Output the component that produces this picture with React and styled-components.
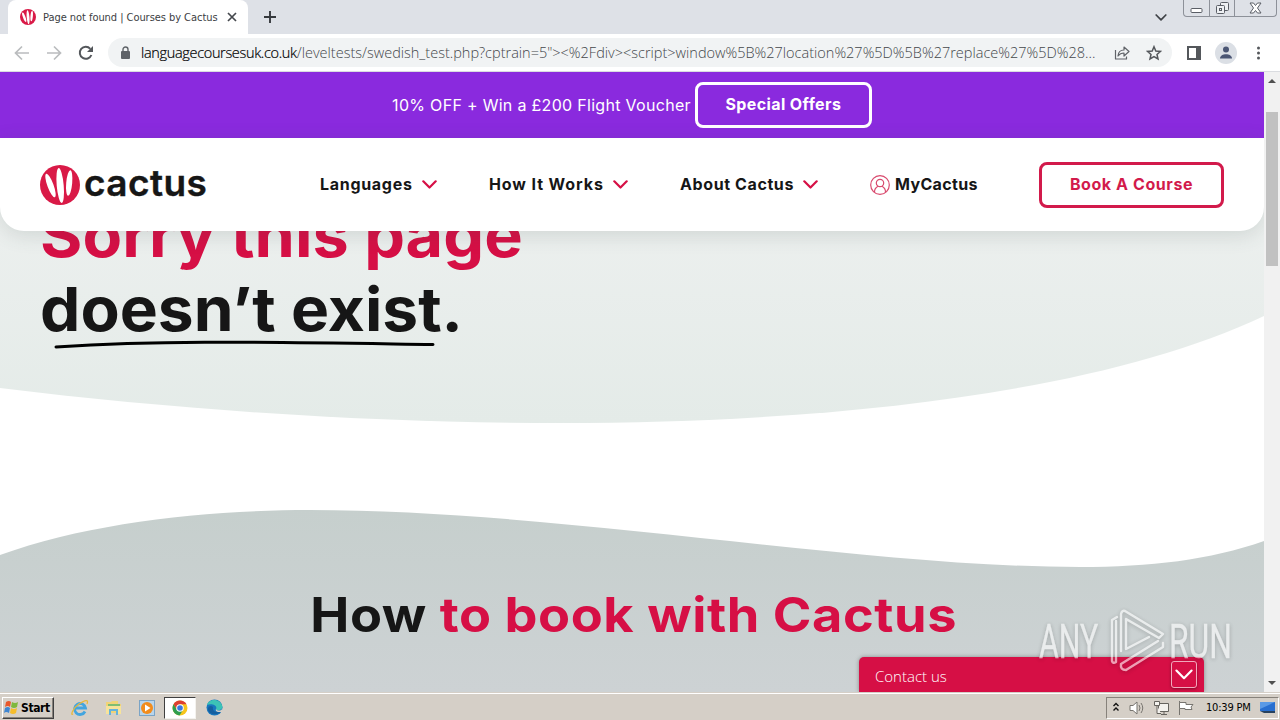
import React from 'react';
import styled, { createGlobalStyle } from 'styled-components';

const GlobalStyle = createGlobalStyle`
    * { box-sizing: border-box; }
    body {
        margin: 0;
        overflow: hidden;
        font-family: Inter, "Open Sans", sans-serif;
        color: #161616;
    }
    svg { display: block; flex: none; }
`;
const Screen = styled.div`
    width: 1280px;
    height: 720px;
    display: flex;
    flex-direction: column;
    overflow: hidden;
    background: #fff;
`;
const Text = styled.span`
    display: block;
    white-space: nowrap;
    letter-spacing: ${(p) => p.$track || 0}px;
`;

/* browser */
const TabStrip = styled.div`
    position: relative;
    height: 34px;
    background: #dee1e7;
    display: flex;
    align-items: stretch;
    padding-left: 8px;
`;
const Tab = styled.div`
    width: 240px;
    background: #fff;
    border-radius: 8px 8px 0 0;
    display: flex;
    align-items: center;
    padding-left: 12px;
    gap: 7px;
    font: 11px "DejaVu Sans", sans-serif;
    font-stretch: condensed;
    color: #3c4043;
    svg:last-child { margin-left: -1px; }
`;
const NewTab = styled.div`
    display: flex;
    align-items: center;
    padding-left: 15px;
`;
const TabSearch = styled.div`
    margin-left: auto;
    display: flex;
    align-items: center;
    padding-right: 16px;
`;
const WindowButtons = styled.div`
    display: flex;
    width: 94px;
    height: 17px;
    margin-right: 3px;
    border: 1px solid #8d9199;
    border-top: 0;
    border-radius: 0 0 4px 4px;
`;
const WindowButton = styled.div`
    width: ${(p) => p.$w}px;
    display: flex;
    align-items: center;
    justify-content: center;
    & + & { border-left: 1px solid #8d9199; }
`;
const Toolbar = styled.div`
    height: 38px;
    border-bottom: 1px solid #dadce0;
    display: flex;
    align-items: center;
    padding-left: 14px;
`;
const NavButtons = styled.div`
    display: flex;
    gap: 16px;
    width: 94px;
`;
const AddressBar = styled.div`
    width: 1064px;
    height: 29px;
    border-radius: 15px;
    background: #f1f3f4;
    display: flex;
    align-items: center;
    padding: 0 10px 0 12px;
`;
const Url = styled(Text)`
    width: 973px;
    margin-left: 9px;
    font: 300 14.5px "Open Sans", sans-serif;
    color: #44474b;
    b {
        font-weight: 300;
        letter-spacing: -0.33px;
        color: #000;
        -webkit-text-stroke: 0.2px #000;
    }
`;
const AddressIcons = styled.div`
    display: flex;
    gap: 16px;
`;
const ToolbarIcons = styled.div`
    display: flex;
    align-items: center;
    gap: 14px;
    padding-left: 14px;
`;

/* page */
const Viewport = styled.div`
    height: 620px;
    display: flex;
`;
const Page = styled.main`
    position: relative;
    width: 1264px;
    overflow: hidden;
`;
const Banner = styled.div`
    height: 66px;
    background: #8a2ade;
    color: #fff;
    display: flex;
    align-items: center;
    justify-content: center;
    gap: 4px;
    font-size: 16px;
`;
const OutlineButton = styled.div`
    width: ${(p) => p.$w}px;
    height: 46px;
    border: 3px solid ${(p) => p.$color};
    border-radius: 8px;
    color: ${(p) => p.$color};
    display: flex;
    align-items: center;
    justify-content: center;
    font-size: 16px;
    font-weight: 700;
    padding-bottom: 2px;
`;
const Header = styled.header`
    position: relative;
    z-index: 2;
    height: 93px;
    padding: 0 40px;
    background: #fff;
    border-radius: 0 0 24px 24px;
    box-shadow: 0 4px 20px rgba(60, 80, 75, 0.16);
    display: grid;
    grid-template-columns: 280px 169px 191px 190px 169px 185px;
    align-items: center;
`;
const Brand = styled.div`
    display: flex;
    align-items: center;
    gap: 4px;
    padding-top: 1px;
`;
const BrandName = styled(Text)`
    font: 600 37px/40px Inter, sans-serif;
    margin-top: -4px;
    -webkit-text-stroke: 0.4px #161616;
`;
const NavItem = styled.div`
    display: flex;
    align-items: center;
    gap: ${(p) => p.$gap || 9}px;
    font-size: 16px;
    font-weight: 700;
    color: #161616;
    span { margin-top: -1px; }
`;
const Hero = styled.section`
    position: relative;
    height: 232px;
    margin-top: -40px;
    padding: 7px 40px 0;
`;
const Backdrop = styled.svg`
    position: absolute;
    left: 0;
    top: 0;
    z-index: -1;
`;
const HeroTitle = styled.h1`
    margin: 0;
    font-size: 61px;
    line-height: 74px;
    font-weight: 700;
    color: #161616;
`;
const WideText = styled(Text)`
    transform: scaleX(${(p) => p.$stretch});
    transform-origin: ${(p) => p.$origin || 'left'};
    color: ${(p) => (p.$pink ? '#d60f45' : '#161616')};
`;
const Pink = styled.span`
    color: #d60f45;
`;
const Underline = styled.svg`
    margin: -6px 0 0 14px;
`;
const Booking = styled.section`
    position: relative;
    height: 182px;
    margin-top: 87px;
    padding-top: 75px;
    display: flex;
    justify-content: center;
`;
const BookingTitle = styled.h2`
    margin: 0 0 0 3px;
    height: 60px;
    font-size: 48px;
    line-height: 60px;
    font-weight: 700;
`;
const Layers = styled.div`
    position: relative;
    z-index: 0;
`;
const ContactBar = styled.div`
    position: absolute;
    left: 859px;
    bottom: 0;
    width: 345px;
    height: 35px;
    padding: 0 7px 0 16px;
    background: #d60f45;
    border-radius: 5px 5px 0 0;
    box-shadow: 0 0 4px rgba(0, 0, 0, 0.35);
    color: #fff;
    display: flex;
    align-items: center;
    justify-content: space-between;
    font: 300 15px "Open Sans", sans-serif;
    span { padding-top: 3px; }
`;
const Collapse = styled.div`
    width: 26px;
    height: 27px;
    border: 1px solid #f3a9bd;
    border-radius: 3px;
    display: flex;
    align-items: center;
    justify-content: center;
    box-shadow: 0 1px 3px rgba(0, 0, 0, 0.4);
`;
const Watermark = styled.svg`
    position: absolute;
    left: 1036px;
    top: 535px;
    z-index: 3;
    filter: drop-shadow(0 1px 2px rgba(0, 0, 0, 0.35));
`;
const Scrollbar = styled.div`
    width: 16px;
    background: #f1f1f1;
    display: flex;
    flex-direction: column;
    align-items: center;
    padding: 7px 0;
`;
const Thumb = styled.div`
    width: 12px;
    height: 154px;
    margin: 29px 0 auto;
    background: #c1c1c1;
`;

/* desktop */
const Taskbar = styled.footer`
    height: 28px;
    background: #d5cfc7;
    border-top: 1px solid #d5cfc7;
    box-shadow: inset 0 1px #fff;
    display: flex;
    align-items: center;
    padding: 3px 1px 1px 2px;
`;
const Start = styled.div`
    width: 52px;
    height: 22px;
    border: 1px solid;
    border-color: #fff #404040 #404040 #fff;
    box-shadow: inset -1px -1px #87827b;
    display: flex;
    align-items: center;
    gap: 1px;
    font: bold 12px "DejaVu Sans", sans-serif;
    font-stretch: condensed;
    color: #000;
`;
const Launcher = styled.div`
    width: ${(p) => p.$w || 34}px;
    height: 22px;
    display: flex;
    align-items: center;
    justify-content: center;
    ${(p) => p.$active && `
        background: #fff;
        border: 1px solid;
        border-color: #404040 #f4f2ee #f4f2ee #404040;
    `}
`;
const Launchers = styled.div`
    display: flex;
    margin-left: 9px;
`;
const Tray = styled.div`
    margin-left: auto;
    width: 173px;
    height: 22px;
    border: 1px solid;
    border-color: #87827b #fff #fff #87827b;
    display: flex;
    align-items: center;
    padding-left: 5px;
    gap: 8px;
    color: #000;
    font: 11px "DejaVu Sans", sans-serif;
    font-stretch: condensed;
`;
const Clock = styled(Text)`
    margin-left: 3px;
`;

function CactusMark({ size }) {
    return (
        <svg width={size} height={size} viewBox="0 0 40 40">
            <circle cx="20" cy="20" r="20" fill="#d91a47" />
            <g fill="#fff">
                <ellipse cx="10.5" cy="20.5" rx="3.1" ry="12.5" transform="rotate(-20 10.5 20.5)" />
                <ellipse cx="20.2" cy="20.5" rx="3.5" ry="17.5" transform="rotate(-5 20.2 20.5)" />
                <ellipse cx="29.2" cy="18" rx="3" ry="12.8" transform="rotate(5 29.2 18)" />
            </g>
        </svg>
    );
}

function Chevron({ w = 15, h = 9, color = '#d60f45', stroke = 2.2 }) {
    return (
        <svg width={w} height={h} viewBox="0 0 15 9" fill="none" stroke={color} strokeWidth={stroke} strokeLinecap="round" strokeLinejoin="round">
            <path d="M1.3 1.3L7.5 7.5L13.7 1.3" />
        </svg>
    );
}

function BrowserChrome() {
    return (
        <>
            <TabStrip>
                <Tab>
                    <CactusMark size={16} />
                    <Text $track={-0.05}>Page not found | Courses by Cactus</Text>
                    <svg width="16" height="16" viewBox="0 0 16 16" stroke="#45484d" strokeWidth="1.7">
                        <path d="M4 4L12 12M12 4L4 12" />
                    </svg>
                </Tab>
                <NewTab>
                    <svg width="14" height="14" viewBox="0 0 14 14" stroke="#36393e" strokeWidth="1.9">
                        <path d="M7 1V13M1 7H13" />
                    </svg>
                </NewTab>
                <TabSearch>
                    <Chevron w={12} h={7} color="#3f4247" />
                </TabSearch>
                <WindowButtons>
                    <WindowButton $w={25}>
                        <svg width="13" height="13" fill="#fff" stroke="#5a5e66"><rect x="1" y="6.5" width="11" height="4" rx="1" /></svg>
                    </WindowButton>
                    <WindowButton $w={25}>
                        <svg width="13" height="14" fill="#eef0f3" stroke="#5a5e66">
                            <rect x="4.5" y="1.5" width="8" height="8" rx="1" />
                            <rect x=".5" y="4.5" width="8" height="8" rx="1" />
                            <rect x="3.5" y="7.5" width="2" height="2" />
                        </svg>
                    </WindowButton>
                    <WindowButton $w={42}>
                        <svg width="13" height="12" viewBox="0 0 13 12" fill="#fff" stroke="#5a5e66">
                            <path d="M1 1H4.5L6.5 3.5L8.5 1H12L8.5 6L12 11H8.5L6.5 8.5L4.5 11H1L4.5 6Z" />
                        </svg>
                    </WindowButton>
                </WindowButtons>
            </TabStrip>
            <Toolbar>
                <NavButtons>
                    {['M15 8H2M8 1.5L1.5 8L8 14.5', 'M1 8H14M8 1.5L14.5 8L8 14.5'].map((d) => (
                        <svg key={d} width="16" height="16" fill="none" stroke="#babcbe" strokeWidth="1.7"><path d={d} /></svg>
                    ))}
                    <svg width="16" height="16" fill="none" stroke="#54575b" strokeWidth="2">
                        <path d="M13.4 10A6 6 0 1 1 12.3 3.8" />
                        <path d="M15 1V7H9Z" fill="#54575b" stroke="none" />
                    </svg>
                </NavButtons>
                <AddressBar>
                    <svg width="12" height="14" viewBox="0 0 12 14">
                        <rect x="1" y="5" width="9" height="8" rx="1" fill="#5f6368" />
                        <path d="M3 6V3.5A2.5 2.5 0 0 1 8 3.5V6" fill="none" stroke="#5f6368" strokeWidth="1.4" />
                    </svg>
                    <Url $track={0}>
                        <b>languagecoursesuk.co.uk</b>
                        {'/leveltests/swedish_test.php?cptrain=5"><%2Fdiv><script>window%5B%27location%27%5D%5B%27replace%27%5D%28...'}
                    </Url>
                    <AddressIcons>
                        <svg width="16" height="16" fill="none" stroke="#606368" strokeWidth="1.2" strokeLinejoin="round">
                            <path d="M1.5 5V14H12.5V11.5M4 11C4.3 7 6.5 5 10 5V2L15 6.5L10 11V8C7.5 8 5.5 9 4 11Z" />
                        </svg>
                        <svg width="16" height="16" viewBox="0 0 16 16" fill="none" stroke="#54575b" strokeWidth="1.5">
                            <path d="M8 1.7L9.8 6L14.5 6.4L11 9.5L12 14L8 11.6L4 14L5 9.5L1.5 6.4L6.2 6Z" />
                        </svg>
                    </AddressIcons>
                </AddressBar>
                <ToolbarIcons>
                    <svg width="15" height="14"><path d="M2 1H14V13H2Z" fill="none" stroke="#54575b" strokeWidth="2" /><path d="M10 1H14V13H10Z" fill="#54575b" /></svg>
                    <svg width="22" height="22">
                        <circle cx="11" cy="11" r="11" fill="#dbdfe5" />
                        <circle cx="11" cy="7.5" r="3" fill="#4b5674" />
                        <path d="M5 16.5C5 10.8 17 10.8 17 16.5Z" fill="#4b5674" />
                    </svg>
                    <svg width="14" height="16" fill="#54575b">
                        <circle cx="7.5" cy="3" r="1.5" /><circle cx="7.5" cy="8" r="1.5" /><circle cx="7.5" cy="13" r="1.5" />
                    </svg>
                </ToolbarIcons>
            </Toolbar>
        </>
    );
}

function SiteHeader() {
    return (
        <>
            <Banner>
                <Text $track={0.3}>10% OFF + Win a £200 Flight Voucher</Text>
                <OutlineButton $w={177} $color="#fff"><Text $track={0.4}>Special Offers</Text></OutlineButton>
            </Banner>
            <Header>
                <Brand>
                    <CactusMark size={40} />
                    <BrandName $track={0.4}>cactus</BrandName>
                </Brand>
                <NavItem><Text $track={0.7}>Languages</Text><Chevron /></NavItem>
                <NavItem><Text $track={0.9}>How It Works</Text><Chevron /></NavItem>
                <NavItem><Text $track={0.6}>About Cactus</Text><Chevron /></NavItem>
                <NavItem $gap={5}>
                    <svg width="20" height="20" fill="none" stroke="#d94a6e" strokeWidth="1.2">
                        <circle cx="10" cy="10" r="9.3" />
                        <circle cx="10" cy="8" r="3.7" />
                        <path d="M4.5 17C4.5 13.5 6.5 12 8 11.2M15.5 17C15.5 13.5 13.5 12 12 11.2" />
                    </svg>
                    <Text $track={0.35}>MyCactus</Text>
                </NavItem>
                <OutlineButton $w={185} $color="#d21a4b"><Text $track={0.58}>Book A Course</Text></OutlineButton>
            </Header>
        </>
    );
}

function TaskbarRow() {
    return (
        <Taskbar>
            <Start>
                <svg width="17" height="17" viewBox="0 0 17 17">
                    <path d="M3 3Q6 1 8 3L7 8Q5 6 2 8Z" fill="#e8582c" />
                    <path d="M9 3Q12 5 15 3L14 8Q11 10 8 8Z" fill="#7fb83d" />
                    <path d="M2 9Q5 7 7 9L6 14Q3 12 1 14Z" fill="#3f86d2" />
                    <path d="M8 9Q11 11 14 9L13 14Q10 16 7 14Z" fill="#f6bd2b" />
                </svg>
                <Text $track={-0.4}>Start</Text>
            </Start>
            <Launchers>
                <Launcher>
                    <svg width="18" height="18" viewBox="0 0 18 18" fill="none">
                        <path d="M14 12.5A5.5 5.5 0 1 1 14.5 9H5" stroke="#43a5df" strokeWidth="2.8" />
                        <path d="M2 15C-1 17 2 9 8 5C14 1 18 0 16 5" stroke="#e7b83c" strokeWidth="1.3" />
                    </svg>
                </Launcher>
                <Launcher $w={33}>
                    <svg width="17" height="17" viewBox="0 0 17 17">
                        <path d="M1 3H6L7 2H13V5H16V14H1Z" fill="#f1d477" />
                        <path d="M3 5H15V8H3Z" fill="#7fbd73" />
                        <path d="M1 7H16V15H12V11H5V15H1Z" fill="#f7e39a" />
                        <path d="M4 16V10H13V16H11V12H6V16Z" fill="#66b3dc" />
                    </svg>
                </Launcher>
                <Launcher>
                    <svg width="16" height="16" viewBox="0 0 16 16">
                        <rect x=".5" y=".5" width="15" height="15" fill="#b9d5eb" stroke="#7ba4c6" />
                        <circle cx="8" cy="8" r="6" fill="#f28c1c" />
                        <path d="M6 4.5L11.5 8L6 11.5Z" fill="#fff" />
                    </svg>
                </Launcher>
                <Launcher $active $w={32}>
                    <svg width="16" height="16" viewBox="0 0 16 16">
                        <circle cx="8" cy="8" r="7.5" fill="#f6c51c" />
                        <path d="M1.5 4.3A7.5 7.5 0 0 1 14.5 4.3H8L5 10Z" fill="#dd3f32" />
                        <path d="M1.5 4.3A7.5 7.5 0 0 0 7.5 15.5L11 10L5 10Z" fill="#2f9e50" />
                        <circle cx="8" cy="8" r="3.8" fill="#fff" />
                        <circle cx="8" cy="8" r="2.8" fill="#3978df" />
                    </svg>
                </Launcher>
                <Launcher $w={36}>
                    <svg width="17" height="17" viewBox="0 0 17 17">
                        <circle cx="8.5" cy="8.5" r="8" fill="#1877be" />
                        <path d="M1 6C3 -1 15 -1 16.5 8C16 12 10 12 10 10C12 6 5 4 1 6Z" fill="#3cc3b6" />
                        <path d="M7 8C6 12 10 14 15 12.5C12 17 2 16 2 10C2 7 5 6 7 8Z" fill="#155f9f" />
                        <path d="M10 10C11 12 15 12 16 10L17 13H12Q9 12 10 10Z" fill="#d5cfc7" />
                    </svg>
                </Launcher>
            </Launchers>
            <Tray>
                <svg width="8" height="12" fill="none" stroke="#111" strokeWidth="1.4"><path d="M1.5 4L4 1.5L6.5 4M1.5 8.5L4 6L6.5 8.5" /></svg>
                <svg width="17" height="16" fill="#fff" stroke="#77746f">
                    <path d="M2 5.5H5L9 2V14L5 10.5H2Z" /><path d="M11 5Q13 8 11 11M13 3Q16.5 8 13 13" fill="none" />
                </svg>
                <svg width="17" height="16" fill="#f4f2ee" stroke="#66635e">
                    <path d="M5.5 3.5H15.5V11.5H5.5ZM8 14.5H14M11 11.5V14.5" />
                    <path d="M1.5 1.5H6.5V5.5H1.5ZM4 5.5V13.5H8" />
                </svg>
                <svg width="17" height="16" fill="#fff" stroke="#77746f">
                    <path d="M1.5 1V15" /><path d="M1.5 2.5H8V4.5H15L13 7L14 9.5H7V8.5H1.5Z" />
                </svg>
                <Clock $track={-0.2}>10:39 PM</Clock>
                <svg width="17" height="14"><path d="M1 1H16V10H1Z" fill="#286fd0" /><path d="M1 1H16L1 8Z" fill="#5a9ae6" /><path d="M1 10H16V12H5Z" fill="#27425f" /></svg>
            </Tray>
        </Taskbar>
    );
}

export default function App() {
    return (
        <Screen>
            <GlobalStyle />
            <BrowserChrome />
            <Viewport>
                <Page>
                    <SiteHeader />
                    <Layers>
                        <Hero>
                            <Backdrop width="1264" height="232">
                                <defs>
                                    <linearGradient id="hero" x1="0" y1="0" x2="0" y2="1">
                                        <stop offset="0" stopColor="#edf0ef" />
                                        <stop offset="1" stopColor="#e4ebe8" />
                                    </linearGradient>
                                </defs>
                                <path fill="url(#hero)" d="M0 0H1264V125C1110 198 850 232 560 232C380 232 187 220 0 197Z" />
                            </Backdrop>
                            <HeroTitle>
                                <WideText $pink $stretch={1.062}>Sorry this page</WideText>
                                <WideText $stretch={1.05}>doesn’t exist.</WideText>
                            </HeroTitle>
                            <Underline width="382" height="10" fill="none" stroke="#000" strokeWidth="3" strokeLinecap="round">
                                <path d="M2 7C110 0 200 2 379 4.5" />
                            </Underline>
                        </Hero>
                        <Booking>
                            <Backdrop width="1264" height="182">
                                <defs>
                                    <linearGradient id="booking" x1="0" y1="0" x2="0" y2="1">
                                        <stop offset="0" stopColor="#c6cfcd" />
                                        <stop offset="1" stopColor="#cdd2d4" />
                                    </linearGradient>
                                </defs>
                                <path fill="url(#booking)" d="M0 45C90 12 210 0 310 0C560 0 860 57 1080 57C1150 57 1210 50 1264 31V182H0Z" />
                            </Backdrop>
                            <BookingTitle>
                                <WideText $track={0.5} $stretch={1.09} $origin="center">How <Pink>to book with Cactus</Pink></WideText>
                            </BookingTitle>
                        </Booking>
                    </Layers>
                    <ContactBar>
                        <Text>Contact us</Text>
                        <Collapse><Chevron w={20} h={11} color="#fff" stroke={1.8} /></Collapse>
                    </ContactBar>
                    <Watermark width="212" height="70" opacity="0.6">
                        <g fill="#fff" stroke="#fff" strokeWidth="0.3" fontFamily="Roboto" fontWeight="400" fontSize="49">
                            <text transform="translate(3 51) scale(0.62 1)">ANY</text>
                            <text transform="translate(133 51) scale(0.65 1)">RUN</text>
                        </g>
                        <g fill="none" stroke="#fff" strokeWidth="2.4" strokeLinejoin="round" strokeLinecap="round">
                            <path d="M85 44V7Q86 3 89 4L127 27L123 31L90 12V42L113 30" />
                            <path d="M81 10L76 13V54Q77 57 80 55V14" />
                            <path d="M127 36V40L90 63Q84 63 85 57L122 34" />
                        </g>
                    </Watermark>
                </Page>
                <Scrollbar>
                    <svg width="8" height="4" fill="#505050"><path d="M4 0L8 4H0Z" /></svg>
                    <Thumb />
                    <svg width="8" height="4" fill="#505050"><path d="M4 4L8 0H0Z" /></svg>
                </Scrollbar>
            </Viewport>
            <TaskbarRow />
        </Screen>
    );
}
